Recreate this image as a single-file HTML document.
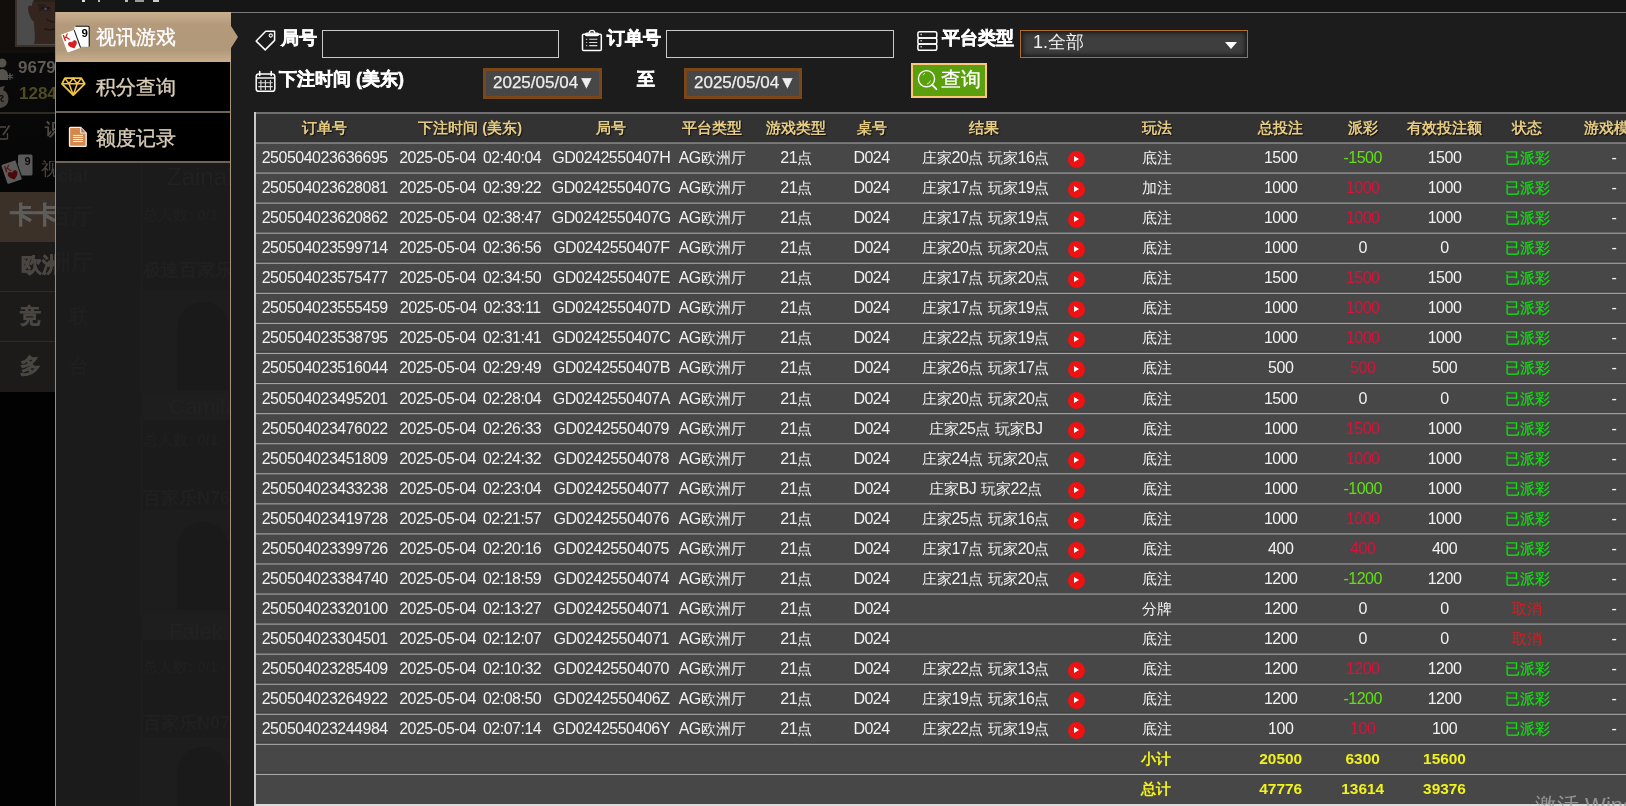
<!DOCTYPE html>
<html><head><meta charset="utf-8">
<style>
*{box-sizing:border-box}
html,body{margin:0;padding:0}
body{will-change:transform;width:1626px;height:806px;overflow:hidden;position:relative;background:#0d0b09;font-family:"Liberation Sans",sans-serif;color:#f0f0f0}
.abs{position:absolute}
/* left dim page */
#lp{position:absolute;left:0;top:0;width:55px;height:806px;background:linear-gradient(#120e0b 0,#120e0b 53px,#0a0a0a 53px,#060606 192px,#020202 392px)}
/* menu */
#menu{position:absolute;left:55px;top:12px;width:176px;height:794px;background:#1b1b1b;border-left:1px solid #a08a70}
.mi{position:absolute;left:0;width:175px;height:50px;background:#000;font-size:20px;color:#d9cdb7}
.mi span{position:absolute;left:40px;top:13.5px;line-height:22px;white-space:nowrap;-webkit-text-stroke:0.35px currentColor}
#panel{position:absolute;left:231px;top:12px;width:1395px;height:794px;background:#1c1c1c;border-top:1px solid #7a7a7a}
#topbar{position:absolute;left:0;top:0;width:1626px;height:12px;background:#161616}
.lab{position:absolute;font-size:18px;font-weight:bold;color:#fff;white-space:nowrap;line-height:22px;-webkit-text-stroke:0.5px #fff}
.inp{position:absolute;border:1px solid #c9c9c9;background:#1c1c1c}
.date{position:absolute;background:#474747;border:3px solid #7a4818;font-size:17px;color:#eee;white-space:nowrap;-webkit-text-stroke:0.25px #eee}
#tbl{position:absolute;left:254px;top:112px;width:1400px;height:694px;background:#474747;border-left:2px solid #c8c8c8;border-bottom:2px solid #dcdcdc}
#thead{position:absolute;left:0;top:0;width:100%;height:31px;background:#333;border-top:2px solid #707070}
.ln{position:absolute;left:0;width:100%;height:1px}
.row{position:absolute;left:0;width:100%;height:30px}
.c{position:absolute;transform:translateX(-50%);white-space:nowrap;font-size:15.4px;line-height:28px;color:#f2f2f2;margin-top:1.5px}
#thead .c{top:0;line-height:30px}
.d{font-weight:normal;font-size:16px;letter-spacing:-0.5px;word-spacing:3px}
.h{font-weight:bold;color:#e6cb80;font-size:14.6px;text-shadow:1px 1px 1px #111;margin-top:-1.5px}
.gr{color:#62e012}
.rd{color:#d8123a}
.ok{color:#12e012;-webkit-text-stroke:0.2px #12e012}
.cx{color:#e01b1b}
.y{color:#f2f21c;font-weight:bold}
.play{position:absolute;top:9px;width:17px;height:17px;border-radius:50%;background:#ef1212}
.play:after{content:"";position:absolute;left:6.5px;top:5px;border-left:5.5px solid #fff;border-top:3.5px solid transparent;border-bottom:3.5px solid transparent}
</style></head><body>
<div id="topbar"><i class="abs" style="left:82px;top:0;width:3px;height:1.5px;background:#ddd"></i><i class="abs" style="left:98px;top:0;width:2px;height:1.5px;background:#bbb"></i><i class="abs" style="left:125px;top:0;width:3px;height:1.5px;background:#bbb"></i><i class="abs" style="left:135px;top:0;width:9px;height:1.5px;background:#999"></i><i class="abs" style="left:153px;top:0;width:6px;height:1.5px;background:#ccc"></i></div>
<div id="lp">
  <div class="abs" style="left:15px;top:0;width:40px;height:47px;background:#3a3028"></div>
  <div class="abs" style="left:17px;top:0;width:38px;height:45px;background:#4b4b4b"></div>
  <svg class="abs" style="left:17px;top:0" width="38" height="45" viewBox="0 0 38 45">
    <path d="M17 0H38V44H17C19 38 17 30 17 22C15 21 11 14 11 8C11 5 13 5 15 6C15 3 16 1 17 0Z" fill="#34261e"/>
    <path d="M21 4C25 3 30 5 32 9L33 12C29 10 24 10 22 12Z" fill="#2a1e18"/>
    <path d="M24 8H33" stroke="#1c1410" stroke-width="1.5"/>
    <circle cx="28.5" cy="8.8" r="1.3" fill="#405060"/>
    <path d="M30 19C32 21 34 22 38 22" stroke="#22170f" stroke-width="1.2" fill="none"/>
    <path d="M27 29C30 30 34 30 38 29" stroke="#22170f" stroke-width="1.4" fill="none"/>
    <path d="M17 0H38V2H17Z" fill="#2a2018"/>
  </svg>
  <svg class="abs" style="left:0;top:56px" width="16" height="54" viewBox="0 0 16 54" fill="#56524d">
    <circle cx="2" cy="7" r="4.5"/>
    <path d="M-4 24C-4 15 0 13 2 13C5 13 8 15 8 20V24Z"/>
    <path d="M10 17V24M6.8 18.8L13.2 22.2M6.8 22.2L13.2 18.8" stroke="#56524d" stroke-width="1.2"/>
    <path d="M0 31L5 30L3 34C8 36 9 41 8 46C7 50 3 52 -2 52V31Z" fill="#4a4641"/>
    <path d="M0 40C3 39 4 41 2 42C0 43 1 46 4 45" stroke="#0d0b09" stroke-width="1.2" fill="none"/>
  </svg>
  <div class="abs" style="left:18px;top:58px;font-size:17px;font-weight:bold;color:#5e5a55;line-height:20px">9679</div>
  <div class="abs" style="left:19px;top:84px;font-size:17px;font-weight:bold;color:#4f4b22;line-height:20px">1284</div>
  <div class="abs" style="left:0;top:112px;width:55px;height:2px;background:#2e2a26"></div>
  <svg class="abs" style="left:0;top:122px" width="12" height="20" viewBox="0 0 12 20" fill="none" stroke="#4d4844" stroke-width="1.3">
    <path d="M-2 5H6M7.5 17H-2M7.5 11V17"/><path d="M3 13L9.5 3.5" stroke-width="1.6"/>
  </svg>
  <div class="abs" style="left:45px;top:120px;font-size:17px;font-weight:bold;color:#4e4944;line-height:20px;white-space:nowrap">识</div>
  <svg class="abs" style="left:0;top:150px" width="40" height="40" viewBox="0 0 40 40">
    <rect x="18" y="4.5" width="14.5" height="21" rx="1.5" fill="#5a5a5a"/>
    <text x="24.5" y="15" font-family="Liberation Sans" font-size="11" font-weight="bold" fill="#0a0a0a">9</text>
    <g transform="rotate(-19 12 22)">
      <rect x="4" y="12" width="15.5" height="20" rx="1.2" fill="#5c5c5c"/>
      <path d="M19.5 12V32" stroke="#111" stroke-width="1"/>
      <text x="5.6" y="20.5" font-family="Liberation Sans" font-size="9.5" font-weight="bold" fill="#5a1010">K</text>
      <path d="M12 30C7.8 26.8 7 25.2 7 23.7c0-1.5 1.1-2.5 2.4-2.5 1.1 0 1.9.6 2.6 1.5.7-.9 1.5-1.5 2.6-1.5 1.3 0 2.4 1 2.4 2.5 0 1.5-.8 3.1-5 6.3z" fill="#4a0a0a"/>
    </g>
  </svg>
  <div class="abs" style="left:41px;top:158px;font-size:18px;color:#4a4540;line-height:22px;white-space:nowrap">视</div>
  <div class="abs" style="left:0;top:192px;width:55px;height:50px;background:#3b3129"></div>
  <div class="abs" style="left:0;top:242px;width:55px;height:150px;background:#1d1b19"></div>
  <div class="abs" style="left:0;top:291px;width:55px;height:1px;background:#2e2b27"></div>
  <div class="abs" style="left:0;top:341px;width:55px;height:1px;background:#2e2b27"></div>
  <div class="abs" style="left:10px;top:201px;font-size:24px;font-weight:bold;color:#5e5d5b;line-height:28px;white-space:nowrap;-webkit-text-stroke:0.6px #5e5d5b">卡卡</div>
  <div class="abs" style="left:21px;top:252px;font-size:21px;font-weight:bold;color:#4a4642;line-height:26px;white-space:nowrap;-webkit-text-stroke:0.6px #4a4642">欧洲</div>
  <div class="abs" style="left:20px;top:303px;font-size:21px;font-weight:bold;color:#4a4642;line-height:26px;white-space:nowrap;-webkit-text-stroke:0.6px #4a4642">竞</div>
  <div class="abs" style="left:20px;top:353px;font-size:21px;font-weight:bold;color:#4a4642;line-height:26px;white-space:nowrap;-webkit-text-stroke:0.6px #4a4642">多</div>
</div>
<div id="menu">

  <div class="abs" style="left:1px;top:0;width:174px;height:644px;top:150px;overflow:hidden;color:#1f1f1f;font-weight:bold;white-space:nowrap">
    <div class="abs" style="left:-20px;top:4px;font-size:18px;color:#1f1f1f">nacial</div>
    <div class="abs" style="left:-8px;top:40px;font-size:22px">百厅</div>
    <div class="abs" style="left:-8px;top:86px;font-size:22px">洲厅</div>
    <div class="abs" style="left:12px;top:141px;font-size:20px">联</div>
    <div class="abs" style="left:12px;top:191px;font-size:20px">台</div>
    
    
    <div class="abs" style="left:84px;top:0;width:1px;height:644px;background:#1f1f1f"></div>
    
    <div class="abs" style="left:110px;top:1px;font-size:24px;font-weight:normal;color:#212121">Zainab</div>
    <div class="abs" style="left:86px;top:44px;font-size:15px;color:#1f1f1f">总人数: 0/1 · 百</div>
    <div class="abs" style="left:86px;top:96px;font-size:18px;color:#202020">极速百家乐N</div>
    <div class="abs" style="left:86px;top:128px;width:90px;height:104px;background:#1d1d1d"></div>
    <div class="abs" style="left:120px;top:140px;width:52px;height:88px;border-radius:26px 26px 0 0;background:#191919;opacity:.6"></div>
    <div class="abs" style="left:86px;top:232px;width:90px;height:26px;background:#1e1e1e"></div>
    <div class="abs" style="left:112px;top:232px;font-size:22px;font-weight:normal;color:#222">Camila</div>
    <div class="abs" style="left:86px;top:269px;font-size:15px;color:#1f1f1f">总人数: 0/1 · 百</div>
    <div class="abs" style="left:86px;top:324px;font-size:18px;color:#202020">百家乐N76</div>
    <div class="abs" style="left:86px;top:348px;width:90px;height:104px;background:#1d1d1d"></div>
    <div class="abs" style="left:120px;top:360px;width:52px;height:88px;border-radius:26px 26px 0 0;background:#191919;opacity:.6"></div>
    <div class="abs" style="left:86px;top:452px;width:90px;height:26px;background:#1e1e1e"></div>
    <div class="abs" style="left:112px;top:457px;font-size:22px;font-weight:normal;color:#222">Falek</div>
    <div class="abs" style="left:86px;top:496px;font-size:15px;color:#1f1f1f">总人数: 0/1 · 百</div>
    <div class="abs" style="left:86px;top:549px;font-size:18px;color:#202020">百家乐N07</div>
    <div class="abs" style="left:86px;top:575px;width:90px;height:104px;background:#1d1d1d"></div>
    <div class="abs" style="left:120px;top:585px;width:52px;height:88px;border-radius:26px 26px 0 0;background:#191919;opacity:.6"></div>
  </div>
  <div class="mi" style="top:0;height:50px;background:linear-gradient(#c9b08e,#b49a7b 25%,#b0987a 75%,#c8ae8c)"><span style="color:#fff">视讯游戏</span></div>
  <div class="mi" style="top:50px;height:50px"><span>积分查询</span></div>
  <div class="abs" style="left:0;top:99px;width:175px;height:2px;background:#6d6356"></div>
  <div class="mi" style="top:101px;height:49px"><span>额度记录</span></div>
  <div class="abs" style="left:0;top:149px;width:175px;height:2px;background:#6d6356"></div>
  <div class="abs" style="left:174px;top:50px;width:1px;height:744px;background:#a8927a"></div><div class="abs" style="left:175px;top:50px;width:1px;height:744px;background:#3a342e"></div>
</div>
<div id="panel"></div>
<div class="abs" style="left:231px;top:26px;width:0;height:0;border-left:7px solid #b49a7b;border-top:11.5px solid transparent;border-bottom:11.5px solid transparent"></div>

<div class="lab" style="left:281px;top:27px">局号</div>
<div class="inp" style="left:322px;top:30px;width:237px;height:28px"></div>
<div class="lab" style="left:607px;top:27px">订单号</div>
<div class="inp" style="left:666px;top:30px;width:228px;height:28px"></div>
<div class="lab" style="left:942px;top:27px">平台类型</div>
<div class="abs" style="left:1020px;top:30px;width:228px;height:28px;border:1px solid #b26c30;background:#3e3e3e;box-shadow:inset 0 0 4px 2px #1a1a1a;font-size:18px;color:#eee;line-height:23px;padding-left:12px">1.全部</div>
<div class="abs" style="left:1225px;top:42px;width:0;height:0;border-top:7px solid #fff;border-left:6px solid transparent;border-right:6px solid transparent"></div>

<div class="lab" style="left:279px;top:68px">下注时间 (美东)</div>
<div class="date" style="left:483px;top:68px;width:119px;height:31px;line-height:23px;padding-left:7px">2025/05/04▼</div>
<div class="lab" style="left:637px;top:68px">至</div>
<div class="date" style="left:684px;top:68px;width:118px;height:31px;line-height:23px;padding-left:7px">2025/05/04▼</div>
<div class="abs" style="left:911px;top:63px;width:76px;height:35px;background:#5aa00c;border:2px solid #fdc67a;font-size:20px;color:#fff;line-height:29px;padding-left:28px;-webkit-text-stroke:0.3px #fff">查询</div>


<svg class="abs" style="left:58px;top:22px" width="36" height="34" viewBox="0 0 36 34">
  <rect x="16.4" y="4.2" width="14.6" height="20.6" rx="1.3" fill="#fff"/>
  <path d="M17.5 4.3H30a1.3 1.3 0 0 1 1.2 1.3V24.6" stroke="#151515" stroke-width="1.1" fill="none"/>
  <text x="23.6" y="14.6" font-family="Liberation Sans" font-size="11.5" font-weight="bold" fill="#000">9</text>
  <g transform="rotate(-20 12.8 19.2)">
    <rect x="5.8" y="9.6" width="14" height="19.2" rx="1.2" fill="#fff"/>
    <path d="M19.8 9.9V28.4" stroke="#222" stroke-width="1.1"/>
    <text x="6.6" y="17.4" font-family="Liberation Sans" font-size="9.5" font-weight="bold" fill="#d42020">K</text>
    <path d="M13.6 27.2C9.6 24.2 9.1 23 9.1 21.7c0-1.3 1-2.2 2.2-2.2 1 0 1.7.5 2.3 1.3.6-.8 1.3-1.3 2.3-1.3 1.2 0 2.2.9 2.2 2.2 0 1.3-.5 2.5-4.5 5.5z" fill="#d42020"/>
  </g>
</svg>
<svg class="abs" style="left:58px;top:72px" width="34" height="28" viewBox="0 0 34 28" fill="none" stroke="#f3c542" stroke-width="1.8" stroke-linejoin="round">
  <path d="M6.9 6.1H23.3L26.7 11.8L15.3 23.1L4 11.8Z"/>
  <path d="M4 11.8H26.7M6.9 6.1L11 11.8L15.1 6.1L19.2 11.8L23.3 6.1M11 11.8L15.3 23.1L19.2 11.8" stroke-width="1.5"/>
</svg>
<svg class="abs" style="left:64px;top:122px" width="28" height="28" viewBox="0 0 28 28">
  <path d="M6.4 5.4H16.7L22.2 11V23.5a.9.9 0 0 1-.9.9H6.4a.9.9 0 0 1-.9-.9V6.3a.9.9 0 0 1 .9-.9z" fill="#d4884e" stroke="#f4f0ea" stroke-width="1.3"/>
  <path d="M16.7 5.6V11H22" fill="#c07a40" stroke="#f4f0ea" stroke-width="1"/>
  <path d="M9.2 13.4H19M9.2 15.4H19M9.2 17.5H19M9.2 19.5H19" stroke="#fbeee2" stroke-width="1"/>
</svg>
<svg class="abs" style="left:252px;top:27px" width="28" height="28" viewBox="0 0 28 28" fill="none" stroke="#fff" stroke-width="1.5" stroke-linejoin="round">
  <path d="M13.7 4.3H22.6V13.4L13.2 22.9L4.2 14.1Z"/>
  <circle cx="18.75" cy="8.5" r="1.6" stroke-width="1.1"/>
</svg>
<svg class="abs" style="left:252px;top:68px" width="28" height="28" viewBox="0 0 28 28" fill="none" stroke="#fff">
  <rect x="4.2" y="5.9" width="18.6" height="17.4" rx="2.6" stroke-width="1.5"/>
  <path d="M4.5 10H22.5" stroke-width="1.4"/>
  <path d="M7.7 3.5V7.5M19.2 3.5V7.5" stroke-width="1.6" stroke-linecap="round"/>
  <path d="M6.3 14.8H20.7M6.3 18.6H20.7M8.9 12V22M13.4 12V22M18.4 12V22" stroke-width="1.1" stroke="#ddd"/>
</svg>
<svg class="abs" style="left:578px;top:26px" width="28" height="28" viewBox="0 0 28 28" fill="none" stroke="#fff">
  <rect x="4.5" y="8.3" width="18.8" height="16.2" rx="1" stroke-width="1.5"/>
  <rect x="7.6" y="7.2" width="12.8" height="2.4" rx="1.2" stroke-width="1.3"/>
  <path d="M11.2 6.9a2.8 2.6 0 0 1 5.6 0" stroke-width="1.3"/>
  <path d="M11.2 13.3H19.3M11.2 16.5H19.3M11.2 19.6H19.3" stroke-width="1.1" stroke="#ddd"/>
  <path d="M8.2 13.3H9.2M8.2 16.5H9.2M8.2 19.6H9.2" stroke-width="1.2" stroke="#ddd"/>
</svg>
<svg class="abs" style="left:913px;top:26px" width="28" height="28" viewBox="0 0 28 28" fill="none" stroke="#fff" stroke-width="1.5">
  <rect x="4.9" y="5.7" width="18.9" height="6.3" rx="1.8"/>
  <rect x="4.9" y="12" width="18.9" height="6" rx="1.8"/>
  <rect x="4.9" y="18" width="18.9" height="6.3" rx="1.8"/>
  <path d="M7.5 8.5H8.8M7.5 14.8H8.8M7.5 20.8H8.8" stroke-width="1.4" stroke="#ddd"/>
</svg>
<svg class="abs" style="left:914px;top:66px" width="26" height="28" viewBox="0 0 26 28" fill="none" stroke="#fff">
  <circle cx="12.5" cy="12.7" r="8.1" stroke-width="1.4"/>
  <path d="M18 18.6L22.4 23.2" stroke-width="1.8" stroke-linecap="round"/>
  <path d="M9 9.3a5 5 0 0 1 2-2" stroke-width="0.8" stroke="#dfe"/>
  <path d="M16.6 14.5a5 5 0 0 1-3.8 3.6" stroke-width="0.8" stroke="#dfe"/>
</svg>

<div id="tbl">
  <div id="thead"><span class="c h" style="left:68.7px;top:0px">订单号</span><span class="c h" style="left:214.2px;top:0px">下注时间 (美东)</span><span class="c h" style="left:355.3px;top:0px">局号</span><span class="c h" style="left:456.2px;top:0px">平台类型</span><span class="c h" style="left:540.2px;top:0px">游戏类型</span><span class="c h" style="left:615.5px;top:0px">桌号</span><span class="c h" style="left:727.5px;top:0px">结果</span><span class="c h" style="left:901.4px;top:0px">玩法</span><span class="c h" style="left:1024.7px;top:0px">总投注</span><span class="c h" style="left:1106.7px;top:0px">派彩</span><span class="c h" style="left:1188.5px;top:0px">有效投注额</span><span class="c h" style="left:1271.0px;top:0px">状态</span><span class="c h" style="left:1358.0px;top:0px">游戏模式</span></div>
  <div class="row" style="top:30px"><span class="c " style="left:68.7px;top:0px"><b class="d">250504023636695</b></span><span class="c " style="left:214.2px;top:0px"><b class="d">2025-05-04 02:40:04</b></span><span class="c " style="left:355.3px;top:0px"><b class="d">GD0242550407H</b></span><span class="c " style="left:456.2px;top:0px"><b class="d">AG</b>欧洲厅</span><span class="c " style="left:540.2px;top:0px"><b class="d">21</b>点</span><span class="c " style="left:615.5px;top:0px"><b class="d">D024</b></span><span class="c " style="left:729.5px;top:0px">庄家<b class="d">20</b>点 玩家<b class="d">16</b>点</span><i class="play" style="left:811.9px"></i><span class="c " style="left:901.4px;top:0px">底注</span><span class="c " style="left:1024.7px;top:0px"><b class="d">1500</b></span><span class="c gr" style="left:1106.7px;top:0px"><b class="d">-1500</b></span><span class="c " style="left:1188.5px;top:0px"><b class="d">1500</b></span><span class="c ok" style="left:1271.0px;top:0px">已派彩</span><span class="c " style="left:1358.0px;top:0px"><b class="d">-</b></span></div><div class="row" style="top:60px"><span class="c " style="left:68.7px;top:0px"><b class="d">250504023628081</b></span><span class="c " style="left:214.2px;top:0px"><b class="d">2025-05-04 02:39:22</b></span><span class="c " style="left:355.3px;top:0px"><b class="d">GD0242550407G</b></span><span class="c " style="left:456.2px;top:0px"><b class="d">AG</b>欧洲厅</span><span class="c " style="left:540.2px;top:0px"><b class="d">21</b>点</span><span class="c " style="left:615.5px;top:0px"><b class="d">D024</b></span><span class="c " style="left:729.5px;top:0px">庄家<b class="d">17</b>点 玩家<b class="d">19</b>点</span><i class="play" style="left:811.9px"></i><span class="c " style="left:901.4px;top:0px">加注</span><span class="c " style="left:1024.7px;top:0px"><b class="d">1000</b></span><span class="c rd" style="left:1106.7px;top:0px"><b class="d">1000</b></span><span class="c " style="left:1188.5px;top:0px"><b class="d">1000</b></span><span class="c ok" style="left:1271.0px;top:0px">已派彩</span><span class="c " style="left:1358.0px;top:0px"><b class="d">-</b></span></div><div class="row" style="top:90px"><span class="c " style="left:68.7px;top:0px"><b class="d">250504023620862</b></span><span class="c " style="left:214.2px;top:0px"><b class="d">2025-05-04 02:38:47</b></span><span class="c " style="left:355.3px;top:0px"><b class="d">GD0242550407G</b></span><span class="c " style="left:456.2px;top:0px"><b class="d">AG</b>欧洲厅</span><span class="c " style="left:540.2px;top:0px"><b class="d">21</b>点</span><span class="c " style="left:615.5px;top:0px"><b class="d">D024</b></span><span class="c " style="left:729.5px;top:0px">庄家<b class="d">17</b>点 玩家<b class="d">19</b>点</span><i class="play" style="left:811.9px"></i><span class="c " style="left:901.4px;top:0px">底注</span><span class="c " style="left:1024.7px;top:0px"><b class="d">1000</b></span><span class="c rd" style="left:1106.7px;top:0px"><b class="d">1000</b></span><span class="c " style="left:1188.5px;top:0px"><b class="d">1000</b></span><span class="c ok" style="left:1271.0px;top:0px">已派彩</span><span class="c " style="left:1358.0px;top:0px"><b class="d">-</b></span></div><div class="row" style="top:120px"><span class="c " style="left:68.7px;top:0px"><b class="d">250504023599714</b></span><span class="c " style="left:214.2px;top:0px"><b class="d">2025-05-04 02:36:56</b></span><span class="c " style="left:355.3px;top:0px"><b class="d">GD0242550407F</b></span><span class="c " style="left:456.2px;top:0px"><b class="d">AG</b>欧洲厅</span><span class="c " style="left:540.2px;top:0px"><b class="d">21</b>点</span><span class="c " style="left:615.5px;top:0px"><b class="d">D024</b></span><span class="c " style="left:729.5px;top:0px">庄家<b class="d">20</b>点 玩家<b class="d">20</b>点</span><i class="play" style="left:811.9px"></i><span class="c " style="left:901.4px;top:0px">底注</span><span class="c " style="left:1024.7px;top:0px"><b class="d">1000</b></span><span class="c " style="left:1106.7px;top:0px"><b class="d">0</b></span><span class="c " style="left:1188.5px;top:0px"><b class="d">0</b></span><span class="c ok" style="left:1271.0px;top:0px">已派彩</span><span class="c " style="left:1358.0px;top:0px"><b class="d">-</b></span></div><div class="row" style="top:150px"><span class="c " style="left:68.7px;top:0px"><b class="d">250504023575477</b></span><span class="c " style="left:214.2px;top:0px"><b class="d">2025-05-04 02:34:50</b></span><span class="c " style="left:355.3px;top:0px"><b class="d">GD0242550407E</b></span><span class="c " style="left:456.2px;top:0px"><b class="d">AG</b>欧洲厅</span><span class="c " style="left:540.2px;top:0px"><b class="d">21</b>点</span><span class="c " style="left:615.5px;top:0px"><b class="d">D024</b></span><span class="c " style="left:729.5px;top:0px">庄家<b class="d">17</b>点 玩家<b class="d">20</b>点</span><i class="play" style="left:811.9px"></i><span class="c " style="left:901.4px;top:0px">底注</span><span class="c " style="left:1024.7px;top:0px"><b class="d">1500</b></span><span class="c rd" style="left:1106.7px;top:0px"><b class="d">1500</b></span><span class="c " style="left:1188.5px;top:0px"><b class="d">1500</b></span><span class="c ok" style="left:1271.0px;top:0px">已派彩</span><span class="c " style="left:1358.0px;top:0px"><b class="d">-</b></span></div><div class="row" style="top:180px"><span class="c " style="left:68.7px;top:0px"><b class="d">250504023555459</b></span><span class="c " style="left:214.2px;top:0px"><b class="d">2025-05-04 02:33:11</b></span><span class="c " style="left:355.3px;top:0px"><b class="d">GD0242550407D</b></span><span class="c " style="left:456.2px;top:0px"><b class="d">AG</b>欧洲厅</span><span class="c " style="left:540.2px;top:0px"><b class="d">21</b>点</span><span class="c " style="left:615.5px;top:0px"><b class="d">D024</b></span><span class="c " style="left:729.5px;top:0px">庄家<b class="d">17</b>点 玩家<b class="d">19</b>点</span><i class="play" style="left:811.9px"></i><span class="c " style="left:901.4px;top:0px">底注</span><span class="c " style="left:1024.7px;top:0px"><b class="d">1000</b></span><span class="c rd" style="left:1106.7px;top:0px"><b class="d">1000</b></span><span class="c " style="left:1188.5px;top:0px"><b class="d">1000</b></span><span class="c ok" style="left:1271.0px;top:0px">已派彩</span><span class="c " style="left:1358.0px;top:0px"><b class="d">-</b></span></div><div class="row" style="top:210px"><span class="c " style="left:68.7px;top:0px"><b class="d">250504023538795</b></span><span class="c " style="left:214.2px;top:0px"><b class="d">2025-05-04 02:31:41</b></span><span class="c " style="left:355.3px;top:0px"><b class="d">GD0242550407C</b></span><span class="c " style="left:456.2px;top:0px"><b class="d">AG</b>欧洲厅</span><span class="c " style="left:540.2px;top:0px"><b class="d">21</b>点</span><span class="c " style="left:615.5px;top:0px"><b class="d">D024</b></span><span class="c " style="left:729.5px;top:0px">庄家<b class="d">22</b>点 玩家<b class="d">19</b>点</span><i class="play" style="left:811.9px"></i><span class="c " style="left:901.4px;top:0px">底注</span><span class="c " style="left:1024.7px;top:0px"><b class="d">1000</b></span><span class="c rd" style="left:1106.7px;top:0px"><b class="d">1000</b></span><span class="c " style="left:1188.5px;top:0px"><b class="d">1000</b></span><span class="c ok" style="left:1271.0px;top:0px">已派彩</span><span class="c " style="left:1358.0px;top:0px"><b class="d">-</b></span></div><div class="row" style="top:240px"><span class="c " style="left:68.7px;top:0px"><b class="d">250504023516044</b></span><span class="c " style="left:214.2px;top:0px"><b class="d">2025-05-04 02:29:49</b></span><span class="c " style="left:355.3px;top:0px"><b class="d">GD0242550407B</b></span><span class="c " style="left:456.2px;top:0px"><b class="d">AG</b>欧洲厅</span><span class="c " style="left:540.2px;top:0px"><b class="d">21</b>点</span><span class="c " style="left:615.5px;top:0px"><b class="d">D024</b></span><span class="c " style="left:729.5px;top:0px">庄家<b class="d">26</b>点 玩家<b class="d">17</b>点</span><i class="play" style="left:811.9px"></i><span class="c " style="left:901.4px;top:0px">底注</span><span class="c " style="left:1024.7px;top:0px"><b class="d">500</b></span><span class="c rd" style="left:1106.7px;top:0px"><b class="d">500</b></span><span class="c " style="left:1188.5px;top:0px"><b class="d">500</b></span><span class="c ok" style="left:1271.0px;top:0px">已派彩</span><span class="c " style="left:1358.0px;top:0px"><b class="d">-</b></span></div><div class="row" style="top:271px"><span class="c " style="left:68.7px;top:0px"><b class="d">250504023495201</b></span><span class="c " style="left:214.2px;top:0px"><b class="d">2025-05-04 02:28:04</b></span><span class="c " style="left:355.3px;top:0px"><b class="d">GD0242550407A</b></span><span class="c " style="left:456.2px;top:0px"><b class="d">AG</b>欧洲厅</span><span class="c " style="left:540.2px;top:0px"><b class="d">21</b>点</span><span class="c " style="left:615.5px;top:0px"><b class="d">D024</b></span><span class="c " style="left:729.5px;top:0px">庄家<b class="d">20</b>点 玩家<b class="d">20</b>点</span><i class="play" style="left:811.9px"></i><span class="c " style="left:901.4px;top:0px">底注</span><span class="c " style="left:1024.7px;top:0px"><b class="d">1500</b></span><span class="c " style="left:1106.7px;top:0px"><b class="d">0</b></span><span class="c " style="left:1188.5px;top:0px"><b class="d">0</b></span><span class="c ok" style="left:1271.0px;top:0px">已派彩</span><span class="c " style="left:1358.0px;top:0px"><b class="d">-</b></span></div><div class="row" style="top:301px"><span class="c " style="left:68.7px;top:0px"><b class="d">250504023476022</b></span><span class="c " style="left:214.2px;top:0px"><b class="d">2025-05-04 02:26:33</b></span><span class="c " style="left:355.3px;top:0px"><b class="d">GD02425504079</b></span><span class="c " style="left:456.2px;top:0px"><b class="d">AG</b>欧洲厅</span><span class="c " style="left:540.2px;top:0px"><b class="d">21</b>点</span><span class="c " style="left:615.5px;top:0px"><b class="d">D024</b></span><span class="c " style="left:729.5px;top:0px">庄家<b class="d">25</b>点 玩家<b class="d">BJ</b></span><i class="play" style="left:811.9px"></i><span class="c " style="left:901.4px;top:0px">底注</span><span class="c " style="left:1024.7px;top:0px"><b class="d">1000</b></span><span class="c rd" style="left:1106.7px;top:0px"><b class="d">1500</b></span><span class="c " style="left:1188.5px;top:0px"><b class="d">1000</b></span><span class="c ok" style="left:1271.0px;top:0px">已派彩</span><span class="c " style="left:1358.0px;top:0px"><b class="d">-</b></span></div><div class="row" style="top:331px"><span class="c " style="left:68.7px;top:0px"><b class="d">250504023451809</b></span><span class="c " style="left:214.2px;top:0px"><b class="d">2025-05-04 02:24:32</b></span><span class="c " style="left:355.3px;top:0px"><b class="d">GD02425504078</b></span><span class="c " style="left:456.2px;top:0px"><b class="d">AG</b>欧洲厅</span><span class="c " style="left:540.2px;top:0px"><b class="d">21</b>点</span><span class="c " style="left:615.5px;top:0px"><b class="d">D024</b></span><span class="c " style="left:729.5px;top:0px">庄家<b class="d">24</b>点 玩家<b class="d">20</b>点</span><i class="play" style="left:811.9px"></i><span class="c " style="left:901.4px;top:0px">底注</span><span class="c " style="left:1024.7px;top:0px"><b class="d">1000</b></span><span class="c rd" style="left:1106.7px;top:0px"><b class="d">1000</b></span><span class="c " style="left:1188.5px;top:0px"><b class="d">1000</b></span><span class="c ok" style="left:1271.0px;top:0px">已派彩</span><span class="c " style="left:1358.0px;top:0px"><b class="d">-</b></span></div><div class="row" style="top:361px"><span class="c " style="left:68.7px;top:0px"><b class="d">250504023433238</b></span><span class="c " style="left:214.2px;top:0px"><b class="d">2025-05-04 02:23:04</b></span><span class="c " style="left:355.3px;top:0px"><b class="d">GD02425504077</b></span><span class="c " style="left:456.2px;top:0px"><b class="d">AG</b>欧洲厅</span><span class="c " style="left:540.2px;top:0px"><b class="d">21</b>点</span><span class="c " style="left:615.5px;top:0px"><b class="d">D024</b></span><span class="c " style="left:729.5px;top:0px">庄家<b class="d">BJ</b> 玩家<b class="d">22</b>点</span><i class="play" style="left:811.9px"></i><span class="c " style="left:901.4px;top:0px">底注</span><span class="c " style="left:1024.7px;top:0px"><b class="d">1000</b></span><span class="c gr" style="left:1106.7px;top:0px"><b class="d">-1000</b></span><span class="c " style="left:1188.5px;top:0px"><b class="d">1000</b></span><span class="c ok" style="left:1271.0px;top:0px">已派彩</span><span class="c " style="left:1358.0px;top:0px"><b class="d">-</b></span></div><div class="row" style="top:391px"><span class="c " style="left:68.7px;top:0px"><b class="d">250504023419728</b></span><span class="c " style="left:214.2px;top:0px"><b class="d">2025-05-04 02:21:57</b></span><span class="c " style="left:355.3px;top:0px"><b class="d">GD02425504076</b></span><span class="c " style="left:456.2px;top:0px"><b class="d">AG</b>欧洲厅</span><span class="c " style="left:540.2px;top:0px"><b class="d">21</b>点</span><span class="c " style="left:615.5px;top:0px"><b class="d">D024</b></span><span class="c " style="left:729.5px;top:0px">庄家<b class="d">25</b>点 玩家<b class="d">16</b>点</span><i class="play" style="left:811.9px"></i><span class="c " style="left:901.4px;top:0px">底注</span><span class="c " style="left:1024.7px;top:0px"><b class="d">1000</b></span><span class="c rd" style="left:1106.7px;top:0px"><b class="d">1000</b></span><span class="c " style="left:1188.5px;top:0px"><b class="d">1000</b></span><span class="c ok" style="left:1271.0px;top:0px">已派彩</span><span class="c " style="left:1358.0px;top:0px"><b class="d">-</b></span></div><div class="row" style="top:421px"><span class="c " style="left:68.7px;top:0px"><b class="d">250504023399726</b></span><span class="c " style="left:214.2px;top:0px"><b class="d">2025-05-04 02:20:16</b></span><span class="c " style="left:355.3px;top:0px"><b class="d">GD02425504075</b></span><span class="c " style="left:456.2px;top:0px"><b class="d">AG</b>欧洲厅</span><span class="c " style="left:540.2px;top:0px"><b class="d">21</b>点</span><span class="c " style="left:615.5px;top:0px"><b class="d">D024</b></span><span class="c " style="left:729.5px;top:0px">庄家<b class="d">17</b>点 玩家<b class="d">20</b>点</span><i class="play" style="left:811.9px"></i><span class="c " style="left:901.4px;top:0px">底注</span><span class="c " style="left:1024.7px;top:0px"><b class="d">400</b></span><span class="c rd" style="left:1106.7px;top:0px"><b class="d">400</b></span><span class="c " style="left:1188.5px;top:0px"><b class="d">400</b></span><span class="c ok" style="left:1271.0px;top:0px">已派彩</span><span class="c " style="left:1358.0px;top:0px"><b class="d">-</b></span></div><div class="row" style="top:451px"><span class="c " style="left:68.7px;top:0px"><b class="d">250504023384740</b></span><span class="c " style="left:214.2px;top:0px"><b class="d">2025-05-04 02:18:59</b></span><span class="c " style="left:355.3px;top:0px"><b class="d">GD02425504074</b></span><span class="c " style="left:456.2px;top:0px"><b class="d">AG</b>欧洲厅</span><span class="c " style="left:540.2px;top:0px"><b class="d">21</b>点</span><span class="c " style="left:615.5px;top:0px"><b class="d">D024</b></span><span class="c " style="left:729.5px;top:0px">庄家<b class="d">21</b>点 玩家<b class="d">20</b>点</span><i class="play" style="left:811.9px"></i><span class="c " style="left:901.4px;top:0px">底注</span><span class="c " style="left:1024.7px;top:0px"><b class="d">1200</b></span><span class="c gr" style="left:1106.7px;top:0px"><b class="d">-1200</b></span><span class="c " style="left:1188.5px;top:0px"><b class="d">1200</b></span><span class="c ok" style="left:1271.0px;top:0px">已派彩</span><span class="c " style="left:1358.0px;top:0px"><b class="d">-</b></span></div><div class="row" style="top:481px"><span class="c " style="left:68.7px;top:0px"><b class="d">250504023320100</b></span><span class="c " style="left:214.2px;top:0px"><b class="d">2025-05-04 02:13:27</b></span><span class="c " style="left:355.3px;top:0px"><b class="d">GD02425504071</b></span><span class="c " style="left:456.2px;top:0px"><b class="d">AG</b>欧洲厅</span><span class="c " style="left:540.2px;top:0px"><b class="d">21</b>点</span><span class="c " style="left:615.5px;top:0px"><b class="d">D024</b></span><span class="c " style="left:901.4px;top:0px">分牌</span><span class="c " style="left:1024.7px;top:0px"><b class="d">1200</b></span><span class="c " style="left:1106.7px;top:0px"><b class="d">0</b></span><span class="c " style="left:1188.5px;top:0px"><b class="d">0</b></span><span class="c cx" style="left:1271.0px;top:0px">取消</span><span class="c " style="left:1358.0px;top:0px"><b class="d">-</b></span></div><div class="row" style="top:511px"><span class="c " style="left:68.7px;top:0px"><b class="d">250504023304501</b></span><span class="c " style="left:214.2px;top:0px"><b class="d">2025-05-04 02:12:07</b></span><span class="c " style="left:355.3px;top:0px"><b class="d">GD02425504071</b></span><span class="c " style="left:456.2px;top:0px"><b class="d">AG</b>欧洲厅</span><span class="c " style="left:540.2px;top:0px"><b class="d">21</b>点</span><span class="c " style="left:615.5px;top:0px"><b class="d">D024</b></span><span class="c " style="left:901.4px;top:0px">底注</span><span class="c " style="left:1024.7px;top:0px"><b class="d">1200</b></span><span class="c " style="left:1106.7px;top:0px"><b class="d">0</b></span><span class="c " style="left:1188.5px;top:0px"><b class="d">0</b></span><span class="c cx" style="left:1271.0px;top:0px">取消</span><span class="c " style="left:1358.0px;top:0px"><b class="d">-</b></span></div><div class="row" style="top:541px"><span class="c " style="left:68.7px;top:0px"><b class="d">250504023285409</b></span><span class="c " style="left:214.2px;top:0px"><b class="d">2025-05-04 02:10:32</b></span><span class="c " style="left:355.3px;top:0px"><b class="d">GD02425504070</b></span><span class="c " style="left:456.2px;top:0px"><b class="d">AG</b>欧洲厅</span><span class="c " style="left:540.2px;top:0px"><b class="d">21</b>点</span><span class="c " style="left:615.5px;top:0px"><b class="d">D024</b></span><span class="c " style="left:729.5px;top:0px">庄家<b class="d">22</b>点 玩家<b class="d">13</b>点</span><i class="play" style="left:811.9px"></i><span class="c " style="left:901.4px;top:0px">底注</span><span class="c " style="left:1024.7px;top:0px"><b class="d">1200</b></span><span class="c rd" style="left:1106.7px;top:0px"><b class="d">1200</b></span><span class="c " style="left:1188.5px;top:0px"><b class="d">1200</b></span><span class="c ok" style="left:1271.0px;top:0px">已派彩</span><span class="c " style="left:1358.0px;top:0px"><b class="d">-</b></span></div><div class="row" style="top:571px"><span class="c " style="left:68.7px;top:0px"><b class="d">250504023264922</b></span><span class="c " style="left:214.2px;top:0px"><b class="d">2025-05-04 02:08:50</b></span><span class="c " style="left:355.3px;top:0px"><b class="d">GD0242550406Z</b></span><span class="c " style="left:456.2px;top:0px"><b class="d">AG</b>欧洲厅</span><span class="c " style="left:540.2px;top:0px"><b class="d">21</b>点</span><span class="c " style="left:615.5px;top:0px"><b class="d">D024</b></span><span class="c " style="left:729.5px;top:0px">庄家<b class="d">19</b>点 玩家<b class="d">16</b>点</span><i class="play" style="left:811.9px"></i><span class="c " style="left:901.4px;top:0px">底注</span><span class="c " style="left:1024.7px;top:0px"><b class="d">1200</b></span><span class="c gr" style="left:1106.7px;top:0px"><b class="d">-1200</b></span><span class="c " style="left:1188.5px;top:0px"><b class="d">1200</b></span><span class="c ok" style="left:1271.0px;top:0px">已派彩</span><span class="c " style="left:1358.0px;top:0px"><b class="d">-</b></span></div><div class="row" style="top:601px"><span class="c " style="left:68.7px;top:0px"><b class="d">250504023244984</b></span><span class="c " style="left:214.2px;top:0px"><b class="d">2025-05-04 02:07:14</b></span><span class="c " style="left:355.3px;top:0px"><b class="d">GD0242550406Y</b></span><span class="c " style="left:456.2px;top:0px"><b class="d">AG</b>欧洲厅</span><span class="c " style="left:540.2px;top:0px"><b class="d">21</b>点</span><span class="c " style="left:615.5px;top:0px"><b class="d">D024</b></span><span class="c " style="left:729.5px;top:0px">庄家<b class="d">22</b>点 玩家<b class="d">19</b>点</span><i class="play" style="left:811.9px"></i><span class="c " style="left:901.4px;top:0px">底注</span><span class="c " style="left:1024.7px;top:0px"><b class="d">100</b></span><span class="c rd" style="left:1106.7px;top:0px"><b class="d">100</b></span><span class="c " style="left:1188.5px;top:0px"><b class="d">100</b></span><span class="c ok" style="left:1271.0px;top:0px">已派彩</span><span class="c " style="left:1358.0px;top:0px"><b class="d">-</b></span></div><div class="row" style="top:631px"><span class="c y" style="left:900.0px;top:0px">小计</span><span class="c y" style="left:1024.7px;top:0px">20500</span><span class="c y" style="left:1106.7px;top:0px">6300</span><span class="c y" style="left:1188.5px;top:0px">15600</span></div><div class="row" style="top:661px"><span class="c y" style="left:900.0px;top:0px">总计</span><span class="c y" style="left:1024.7px;top:0px">47776</span><span class="c y" style="left:1106.7px;top:0px">13614</span><span class="c y" style="left:1188.5px;top:0px">39376</span></div>
  <i class="ln" style="top:30px;background:#717171"></i><i class="ln" style="top:31px;background:#7a7a7a"></i><i class="ln" style="top:60px;background:#747474"></i><i class="ln" style="top:61px;background:#818181"></i><i class="ln" style="top:90px;background:#6d6d6d"></i><i class="ln" style="top:91px;background:#878787"></i><i class="ln" style="top:120px;background:#676767"></i><i class="ln" style="top:121px;background:#8e8e8e"></i><i class="ln" style="top:150px;background:#606060"></i><i class="ln" style="top:151px;background:#949494"></i><i class="ln" style="top:149px;background:#414141"></i><i class="ln" style="top:180px;background:#5a5a5a"></i><i class="ln" style="top:181px;background:#9b9b9b"></i><i class="ln" style="top:179px;background:#414141"></i><i class="ln" style="top:210px;background:#535353"></i><i class="ln" style="top:211px;background:#a1a1a1"></i><i class="ln" style="top:209px;background:#414141"></i><i class="ln" style="top:240px;background:#4d4d4d"></i><i class="ln" style="top:241px;background:#a4a4a4"></i><i class="ln" style="top:242px;background:#4b4b4b"></i><i class="ln" style="top:239px;background:#414141"></i><i class="ln" style="top:271px;background:#a3a3a3"></i><i class="ln" style="top:272px;background:#515151"></i><i class="ln" style="top:270px;background:#414141"></i><i class="ln" style="top:301px;background:#9d9d9d"></i><i class="ln" style="top:302px;background:#585858"></i><i class="ln" style="top:331px;background:#969696"></i><i class="ln" style="top:332px;background:#5e5e5e"></i><i class="ln" style="top:361px;background:#909090"></i><i class="ln" style="top:362px;background:#656565"></i><i class="ln" style="top:391px;background:#898989"></i><i class="ln" style="top:392px;background:#6b6b6b"></i><i class="ln" style="top:421px;background:#838383"></i><i class="ln" style="top:422px;background:#727272"></i><i class="ln" style="top:451px;background:#7c7c7c"></i><i class="ln" style="top:452px;background:#787878"></i><i class="ln" style="top:481px;background:#767676"></i><i class="ln" style="top:482px;background:#7f7f7f"></i><i class="ln" style="top:511px;background:#6f6f6f"></i><i class="ln" style="top:512px;background:#858585"></i><i class="ln" style="top:541px;background:#686868"></i><i class="ln" style="top:542px;background:#8c8c8c"></i><i class="ln" style="top:571px;background:#626262"></i><i class="ln" style="top:572px;background:#929292"></i><i class="ln" style="top:570px;background:#414141"></i><i class="ln" style="top:601px;background:#5b5b5b"></i><i class="ln" style="top:602px;background:#999999"></i><i class="ln" style="top:600px;background:#414141"></i><i class="ln" style="top:631px;background:#555555"></i><i class="ln" style="top:632px;background:#9f9f9f"></i><i class="ln" style="top:630px;background:#414141"></i><i class="ln" style="top:661px;background:#4e4e4e"></i><i class="ln" style="top:662px;background:#a4a4a4"></i><i class="ln" style="top:663px;background:#494949"></i><i class="ln" style="top:660px;background:#414141"></i>
</div>
<div class="abs" style="left:1535px;top:792.5px;font-size:22px;color:#a0a0a0;white-space:nowrap;line-height:26px;opacity:.85">激活 Windows</div>
</body></html>
